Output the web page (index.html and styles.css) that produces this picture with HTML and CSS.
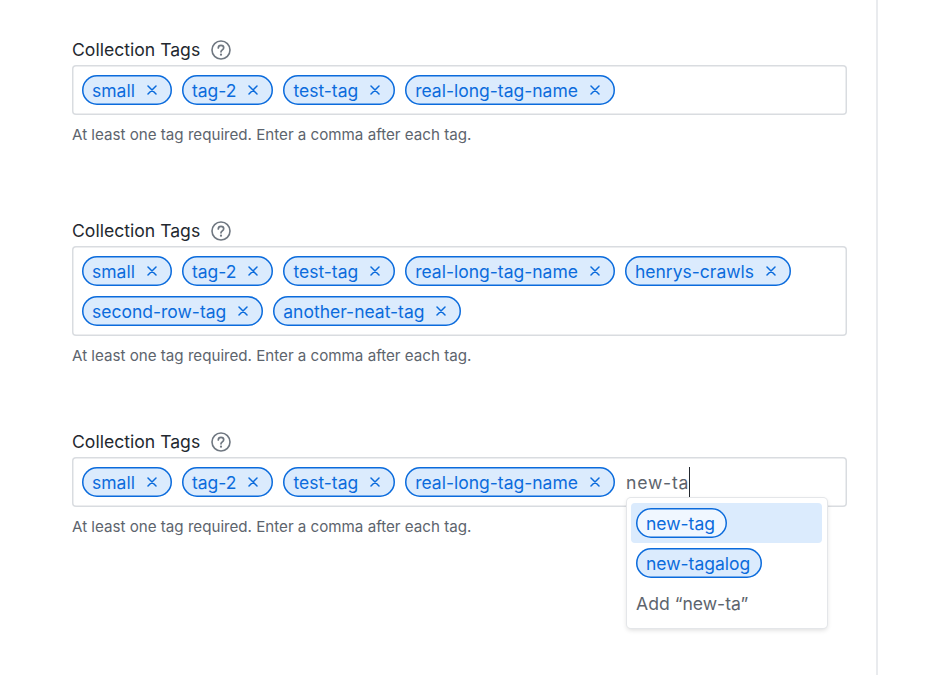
FILE: index.html
```html
<!DOCTYPE html>
<html lang="en">
<head>
  <meta charset="UTF-8">
  <title>Collection Tags</title>
  <link rel="stylesheet" href="styles.css">
</head>
<body>
  <svg class="icon-defs" width="0" height="0">
    <symbol id="x" viewBox="0 0 10 10">
      <path d="M1 1l8 8M9 1l-8 8" fill="none" stroke="currentColor" stroke-width="1.5" stroke-linecap="round"/>
    </symbol>
    <symbol id="help" viewBox="0 0 20 20">
      <circle cx="10" cy="10" r="9" fill="none" stroke="#6f7781" stroke-width="1.6"/>
      <path d="M7.3 7.9c0-1.6 1.2-2.6 2.7-2.6s2.7 1 2.7 2.4c0 2-2.7 2.2-2.7 4.1" fill="none" stroke="#6f7781" stroke-width="1.7" stroke-linecap="round"/>
      <circle cx="10" cy="14.7" r="1.1" fill="#6f7781"/>
    </symbol>
  </svg>

  <main class="page">
    <div class="field field-first">
      <div class="field-label">
        <span>Collection Tags</span>
        <svg class="help-icon"><use href="#help"/></svg>
      </div>
      <div class="tag-input">
        <span class="tag">small<svg class="tag-x"><use href="#x"/></svg></span>
        <span class="tag">tag-2<svg class="tag-x"><use href="#x"/></svg></span>
        <span class="tag">test-tag<svg class="tag-x"><use href="#x"/></svg></span>
        <span class="tag">real-long-tag-name<svg class="tag-x"><use href="#x"/></svg></span>
      </div>
      <p class="help">At least one tag required. Enter a comma after each tag.</p>
    </div>

    <div class="field">
      <div class="field-label">
        <span>Collection Tags</span>
        <svg class="help-icon"><use href="#help"/></svg>
      </div>
      <div class="tag-input">
        <span class="tag">small<svg class="tag-x"><use href="#x"/></svg></span>
        <span class="tag">tag-2<svg class="tag-x"><use href="#x"/></svg></span>
        <span class="tag">test-tag<svg class="tag-x"><use href="#x"/></svg></span>
        <span class="tag">real-long-tag-name<svg class="tag-x"><use href="#x"/></svg></span>
        <span class="tag">henrys-crawls<svg class="tag-x"><use href="#x"/></svg></span>
        <span class="tag">second-row-tag<svg class="tag-x"><use href="#x"/></svg></span>
        <span class="tag">another-neat-tag<svg class="tag-x"><use href="#x"/></svg></span>
      </div>
      <p class="help">At least one tag required. Enter a comma after each tag.</p>
    </div>

    <div class="field">
      <div class="field-label">
        <span>Collection Tags</span>
        <svg class="help-icon"><use href="#help"/></svg>
      </div>
      <div class="tag-input">
        <span class="tag">small<svg class="tag-x"><use href="#x"/></svg></span>
        <span class="tag">tag-2<svg class="tag-x"><use href="#x"/></svg></span>
        <span class="tag">test-tag<svg class="tag-x"><use href="#x"/></svg></span>
        <span class="tag">real-long-tag-name<svg class="tag-x"><use href="#x"/></svg></span>
        <span class="typed">new-ta</span>
        <div class="menu">
          <div class="menu-item active"><span class="tag tag-light">new-tag</span></div>
          <div class="menu-item"><span class="tag">new-tagalog</span></div>
          <div class="menu-item menu-add">Add “new-ta”</div>
        </div>
      </div>
      <p class="help">At least one tag required. Enter a comma after each tag.</p>
    </div>
  </main>
</body>
</html>
```

FILE: styles.css
```css
* {
  margin: 0;
  padding: 0;
  box-sizing: border-box;
}

body {
  font-family: "Inter", sans-serif;
  font-optical-sizing: none;
  background: #fff;
  color: #23282f;
}

.icon-defs {
  position: absolute;
}

.page {
  width: 878px;
  height: 675px;
  padding: 38px 30px 0 72px;
  border-right: 2px solid #e9ebee;
  overflow: hidden;
}

.field {
  margin-bottom: 65px;
}

.field-first {
  margin-bottom: 75px;
}

.field-label {
  display: flex;
  align-items: center;
  gap: 11px;
  height: 24px;
  margin-bottom: 3px;
  font-size: 17.6px;
  line-height: 24px;
}

.help-icon {
  width: 20px;
  height: 20px;
}

.tag-input {
  position: relative;
  display: flex;
  flex-wrap: wrap;
  gap: 10px;
  width: 775px;
  padding: 10px;
  border-radius: 4px;
  box-shadow: inset 0 0 0 1.5px #d9dce0;
}

.tag {
  display: inline-flex;
  align-items: center;
  height: 30px;
  padding: 0 10px;
  font-size: 17.5px;
  white-space: pre;
  color: #0b6bdc;
  background: #dbebfd;
  border-radius: 15px;
  box-shadow: inset 0 0 0 1.5px #0b6bdc;
}

.tag-light {
  background: #f0f7ff;
}

.tag-x {
  width: 10px;
  height: 10px;
  margin: 0 5px 0 12px;
}

.typed {
  display: inline-flex;
  align-items: center;
  height: 30px;
  margin-left: 1px;
  font-size: 17.6px;
  letter-spacing: 0.8px;
  color: #5d646d;
  border-right: 1px solid #23282f;
}

.help {
  margin-top: 11px;
  font-size: 15.15px;
  line-height: 18px;
  color: #5d646d;
}

.menu {
  position: absolute;
  top: 41px;
  left: 555px;
  width: 200px;
  padding: 5px 5px 5px 4px;
  background: #fff;
  border-radius: 4px;
  box-shadow: 0 0 0 1px #e4e6e9, 0 2px 5px rgba(0, 0, 0, 0.15);
}

.menu-item {
  display: flex;
  align-items: center;
  height: 40px;
  padding: 0 5px;
  border-radius: 4px;
}

.menu-item .tag {
  padding-right: 12px;
}

.menu-item.active {
  background: #dbebfd;
}

.menu-add {
  font-size: 17.6px;
  color: #5d646d;
}
```
